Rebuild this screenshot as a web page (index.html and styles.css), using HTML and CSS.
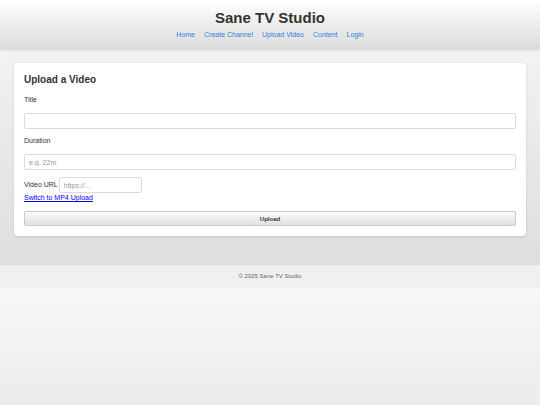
FILE: index.html
```html
<!DOCTYPE html>
<html lang="en">
<head>
<meta charset="utf-8">
<title>Sane TV Studio</title>
<link rel="stylesheet" href="styles.css">
</head>
<body>
<header class="site-header">
  <h1 class="site-title">Sane TV Studio</h1>
  <nav class="site-nav">
    <a href="#">Home</a>
    <a href="#">Create Channel</a>
    <a href="#">Upload Video</a>
    <a href="#">Content</a>
    <a href="#">Login</a>
  </nav>
</header>
<main class="main">
  <section class="card">
    <h2 class="card-title">Upload a Video</h2>
    <form class="upload-form">
      <label class="field-label" for="title">Title</label>
      <input class="text-input" id="title" type="text">
      <label class="field-label" for="duration">Duration</label>
      <input class="text-input" id="duration" type="text" placeholder="e.g. 22m">
      <div class="url-row">
        <label class="inline-label" for="url">Video URL</label>
        <input class="url-input" id="url" type="text" placeholder="https://...">
      </div>
      <a class="switch-link" href="#">Switch to MP4 Upload</a>
      <button class="upload-btn" type="button">Upload</button>
    </form>
  </section>
</main>
<footer class="site-footer">© 2025 Sane TV Studio</footer>
</body>
</html>
```

FILE: styles.css
```css
body {
  margin: 0;
  font-family: "Liberation Sans", Arial, sans-serif;
  color: #333;
  background: linear-gradient(to bottom, #f7f7f7, #dcdcdc);
}

.site-header {
  background: linear-gradient(to bottom, #ffffff, #dcdcdc);
  box-shadow: 0 1px 3px rgba(0, 0, 0, 0.12);
  text-align: center;
  padding: 9px 0 10px;
  height: 30px;
}

.site-title {
  margin: 0;
  font-size: 15px;
  line-height: 18px;
  font-weight: bold;
  color: #333;
}

.site-nav {
  margin-top: 4px;
  display: flex;
  justify-content: center;
  gap: 9px;
  font-size: 7px;
  line-height: 8px;
}

.site-nav a {
  color: #2f7fdb;
  text-decoration: none;
}

.main {
  padding: 14px 14px 29px;
}

.card {
  background: #fff;
  border-radius: 4px;
  box-shadow: 0 1px 3px rgba(0, 0, 0, 0.12);
  padding: 11px 10px 10px;
}

.card-title {
  margin: 0 0 10px;
  font-size: 10px;
  line-height: 12px;
  font-weight: bold;
  color: #333;
}

.upload-form {
  display: flex;
  flex-direction: column;
  align-items: stretch;
}

.field-label {
  display: block;
  font-size: 7px;
  line-height: 8px;
  margin-bottom: 9px;
  color: #333;
}

.text-input {
  box-sizing: border-box;
  height: 16px;
  margin: 0 0 8px;
  border: 1px solid #dcdcdc;
  border-radius: 2px;
  padding: 0 4px;
  font-family: "Liberation Sans", Arial, sans-serif;
  font-size: 7px;
  color: #333;
  background: #fff;
}

.text-input::placeholder,
.url-input::placeholder {
  color: #999;
}

.url-row {
  display: flex;
  align-items: center;
  gap: 1px;
  margin-top: -1px;
}

.inline-label {
  font-size: 7px;
  line-height: 8px;
  color: #333;
}

.url-input {
  box-sizing: border-box;
  width: 83px;
  height: 16px;
  margin: 0;
  border: 1px solid #dcdcdc;
  border-radius: 2px;
  padding: 0 4px;
  font-family: "Liberation Sans", Arial, sans-serif;
  font-size: 7px;
  background: #fff;
}

.switch-link {
  align-self: flex-start;
  font-size: 7px;
  line-height: 8px;
  margin-top: 1px;
  color: #0000ee;
  text-decoration: underline;
}

.upload-btn {
  margin-top: 9px;
  height: 15px;
  border: 1px solid #c8c8c8;
  border-radius: 2px;
  background: linear-gradient(to bottom, #fbfbfb, #e0e0e0);
  font-family: "Liberation Sans", Arial, sans-serif;
  font-size: 6px;
  font-weight: bold;
  color: #333;
  padding: 0;
}

.site-footer {
  background: #f0f0f0;
  text-align: center;
  font-size: 6px;
  line-height: 23px;
  height: 23px;
  color: #666;
}
```
